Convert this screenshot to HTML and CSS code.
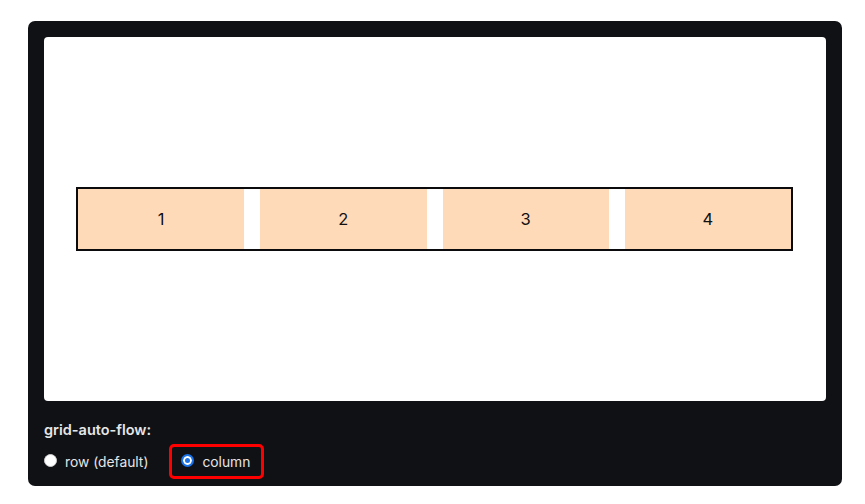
FILE: index.html
```html
<!DOCTYPE html>
<html lang="en">
<head>
<meta charset="utf-8">
<title>grid-auto-flow</title>
<link rel="stylesheet" href="styles.css">
</head>
<body>
<div class="demo">
  <div class="preview">
    <div class="grid">
      <div class="item">1</div>
      <div class="item">2</div>
      <div class="item">3</div>
      <div class="item">4</div>
    </div>
  </div>
  <div class="controls">
    <div class="prop">grid-auto-flow:</div>
    <div class="options">
      <label class="option"><span class="radio"></span><span>row (default)</span></label>
      <label class="option selected"><span class="radio checked"></span><span>column</span></label>
    </div>
  </div>
</div>
</body>
</html>
```

FILE: styles.css
```css
html, body {
  margin: 0;
  padding: 0;
  background: #ffffff;
}

body {
  font-family: Inter, "Open Sans", "Liberation Sans", sans-serif;
}

.demo {
  box-sizing: border-box;
  width: 814px;
  height: 465px;
  margin: 21px 0 0 28px;
  padding: 16px 16px 7px 16px;
  background: #101115;
  border-radius: 7px;
  display: flex;
  flex-direction: column;
}

.preview {
  box-sizing: border-box;
  height: 364px;
  background: #ffffff;
  border-radius: 4px;
  padding: 0 33px 0 32px;
  display: flex;
  align-items: center;
}

.grid {
  flex: 1;
  display: grid;
  grid-auto-flow: column;
  grid-auto-columns: 1fr;
  column-gap: 16px;
  border: 2px solid #0b0b0e;
  height: 60px;
}

.item {
  background: #ffdab9;
  display: flex;
  align-items: center;
  justify-content: center;
  font-size: 16.5px;
  color: #111111;
}

.controls {
  margin-top: 19px;
  color: #e6e6e6;
}

.prop {
  font-size: 14.5px;
  font-weight: 600;
  line-height: 20px;
}

.options {
  margin-top: 4px;
  display: flex;
  align-items: center;
  gap: 21px;
  font-size: 13.8px;
}

.option {
  display: flex;
  align-items: center;
  gap: 8px;
  height: 35px;
  box-sizing: border-box;
}

.option.selected {
  border: 3px solid #ff0000;
  border-radius: 5px;
  padding: 0 11px 0 9px;
}

.radio {
  box-sizing: border-box;
  width: 13px;
  height: 13px;
  border-radius: 50%;
  background: #ffffff;
  border: 1px solid #d0d0d0;
  margin-top: -2px;
}

.radio.checked {
  background: #1a73e8;
  border: 2px solid #1a73e8;
  box-shadow: inset 0 0 0 2px #ffffff;
}
```
